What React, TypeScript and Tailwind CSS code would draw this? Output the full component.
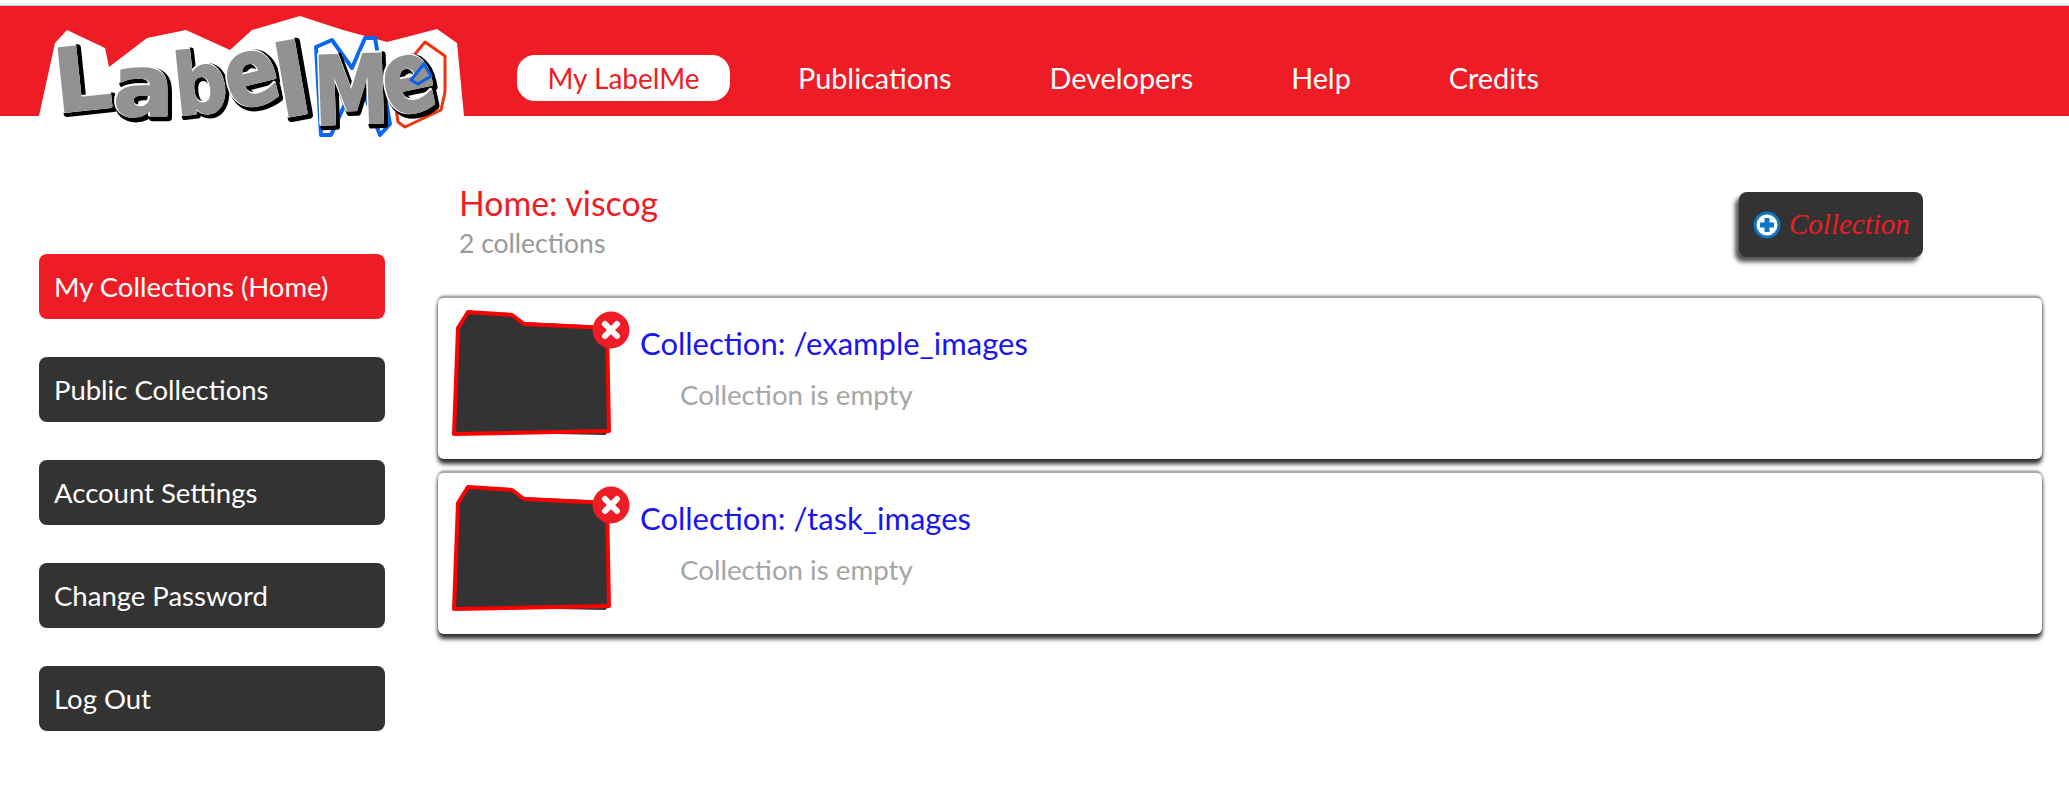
import { ReactNode } from 'react';

const navItems = ['Publications', 'Developers', 'Help', 'Credits'];
const sideItems = ['Public Collections', 'Account Settings', 'Change Password', 'Log Out'];
const collections = ['/example_images', '/task_images'];

function Letter({ x, y, sx, sy, rotate = 0, children }: { x: number; y: number; sx: number; sy: number; rotate?: number; children: ReactNode }) {
  const transform = `translate(${x} ${y}) rotate(${rotate}) scale(${sx} ${sy})`;
  return (
    <g transform={transform} fontFamily="'DejaVu Sans', sans-serif" fontWeight="700" fontSize="100" strokeLinejoin="round">
      <text x="3" y="3" fill="#000" stroke="#000" strokeWidth="8">{children}</text>
      <text fill="#fff" stroke="#fff" strokeWidth="4">{children}</text>
      <text x="1" y="1" fill="#929292" stroke="#929292" strokeWidth="2">{children}</text>
    </g>
  );
}

function Logo() {
  return (
    <svg className="absolute left-0 top-0" width="480" height="145" viewBox="0 0 480 145">
      <polygon points="39,116 55,43 67,30 105,48 109,67 147,38 186,30 230,50 252,30 300,16 343,30 387,42 437,29 457,43 464,116 464,145 39,145" fill="#fff" />
      <polygon points="316,47 332,40 352,68 365,38 375,38 390,124 380,135 365,96 345,104 331,135 321,135" fill="none" stroke="#0b66f0" strokeWidth="4" strokeLinejoin="round" />
      <polygon points="392,82 425,42 445,56 445,92 441,110 405,127 398,122" fill="none" stroke="#f0320f" strokeWidth="3" strokeLinejoin="round" />
      <Letter x={56} y={112} sx={0.9} sy={0.88} rotate={-6}>L</Letter>
      <Letter x={112} y={115} sx={0.9} sy={0.85}>a</Letter>
      <Letter x={176} y={115} sx={0.75} sy={0.85} rotate={-6}>b</Letter>
      <Letter x={231} y={110} sx={0.8} sy={0.95} rotate={-14}>e</Letter>
      <Letter x={280} y={117} sx={1} sy={0.98} rotate={-10}>l</Letter>
      <Letter x={314} y={124} sx={0.76} sy={0.95} rotate={-2}>M</Letter>
      <Letter x={388} y={116} sx={0.78} sy={1} rotate={-12}>e</Letter>
      <polygon points="411,80 424,64 431,76 418,84" fill="none" stroke="#0b5fe0" strokeWidth="3" />
    </svg>
  );
}

function FolderIcon() {
  return (
    <svg className="shrink-0" width="162" height="130" viewBox="0 0 162 130">
      <path d="M5 124 L9 18 L17 3 L61 5 L73 14 L158 18 L159 124 L155 127 Z" fill="#333333" />
      <path d="M4 126 L8 20 L18 4 L62 7 L74 16 L157 20 L159 123 Z" fill="#333333" stroke="#fe0000" strokeWidth="4" strokeLinejoin="round" />
    </svg>
  );
}

function RemoveBadge() {
  return (
    <svg className="absolute left-[154px] top-[13px]" width="38" height="38" viewBox="0 0 38 38">
      <circle cx="19" cy="19" r="18.5" fill="#ee1c25" />
      <path d="M13 13 L25 25 M25 13 L13 25" stroke="#fff" strokeWidth="6" strokeLinecap="round" />
    </svg>
  );
}

function CollectionCard({ name }: { name: string }) {
  return (
    <div className="relative flex h-[163px] items-start rounded-md border-t-2 border-[#aaaaaa] bg-white pl-[12px] pt-[10px] shadow-[0_5px_4px_#333333,0_0_3px_#777777]">
      <FolderIcon />
      <RemoveBadge />
      <div className="ml-[28px]">
        <div className="mt-[17px] text-[31px] leading-[36px] text-[#1a14f0]">Collection: {name}</div>
        <div className="ml-[40px] mt-[17px] text-[27.7px] leading-[34px] text-[#a6a6a6]">Collection is empty</div>
      </div>
    </div>
  );
}

export default function App() {
  return (
    <div className="relative min-h-[805px] overflow-hidden bg-white font-['Lato',sans-serif]">
      <div className="mt-[5px] flex h-[111px] items-start border-t border-[#cccccc] bg-[#ee1c25] pl-[517px] pt-[49px] text-[28.8px] text-white">
        <div className="flex h-[46px] w-[213px] items-center justify-center rounded-[18px] bg-white text-[28px] text-[#ee1c25]">My LabelMe</div>
        <div className="ml-[68px] flex gap-[98px] leading-[46px]">
          {navItems.map((item) => (
            <span key={item}>{item}</span>
          ))}
        </div>
      </div>
      <Logo />

      <div className="flex">
        <div className="flex w-[438px] shrink-0 flex-col gap-[38px] pl-[39px] pt-[138px]">
          <div className="flex h-[65px] w-[346px] items-center rounded-lg bg-[#ee1c25] pl-[15px] text-[27.5px] text-white">My Collections (Home)</div>
          {sideItems.map((item) => (
            <div key={item} className="flex h-[65px] w-[346px] items-center rounded-lg bg-[#333333] pl-[15px] text-[27.5px] text-white">{item}</div>
          ))}
        </div>

        <div className="flex-1 pr-[27px]">
          <div className="flex h-[180px] items-start justify-between pl-[21px] pr-[119px] pt-[67px]">
            <div>
              <div className="text-[33.8px] leading-[40px] text-[#ee1c25]">Home: viscog</div>
              <div className="text-[26.5px] leading-[40px] text-[#999999]">2 collections</div>
            </div>
            <div className="mt-[9px] flex h-[65px] w-[184px] items-center rounded-lg bg-[#333333] pl-[14px] shadow-[-4px_5px_4px_#555555]">
              <svg width="28" height="28" viewBox="0 0 28 28">
                <circle cx="14" cy="14" r="12" fill="#fff" stroke="#0a76c4" strokeWidth="3" />
                <path d="M14 7 V21 M7 14 H21" stroke="#0a76c4" strokeWidth="5" />
              </svg>
              <span className="ml-[8px] font-['Liberation_Serif',serif] text-[29px] italic text-[#ee1c25]">Collection</span>
            </div>
          </div>
          <div className="flex flex-col gap-[12px]">
            {collections.map((name) => (
              <CollectionCard key={name} name={name} />
            ))}
          </div>
        </div>
      </div>
    </div>
  );
}
